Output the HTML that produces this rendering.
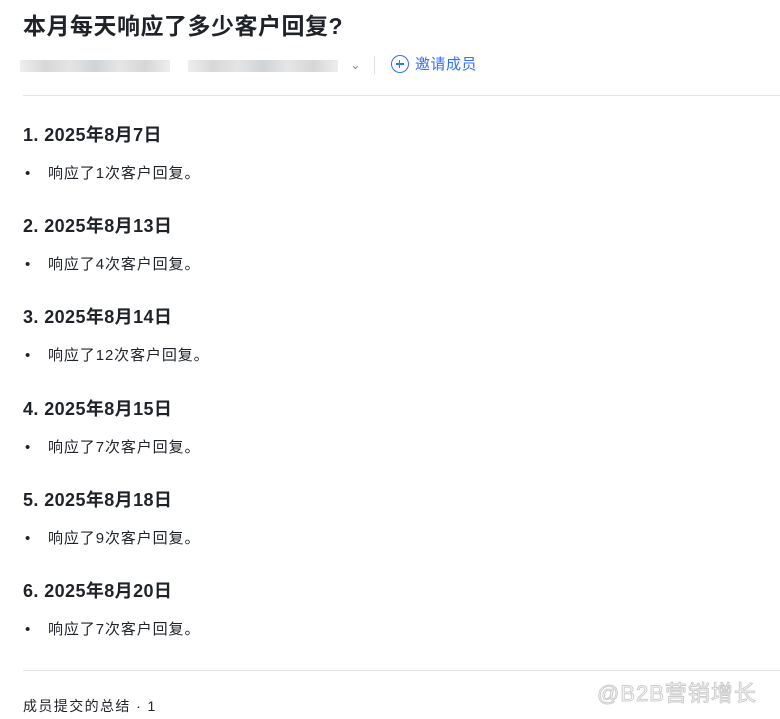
<!DOCTYPE html>
<html><head><meta charset="utf-8"><style>
body{margin:0;background:#fff;width:780px;height:719px;overflow:hidden;font-family:"Liberation Sans","Noto Sans CJK SC",sans-serif;color:#1f2329;position:relative}
h1{position:absolute;left:23px;top:10px;margin:0;font-size:23px;font-weight:bold;line-height:32px;letter-spacing:0.5px}
.meta{position:absolute;top:54px;left:20px;height:22px;width:460px}
.blur{position:absolute;height:12px;top:6px;background:linear-gradient(90deg,#eee,#d8d8d8,#e4e4e4,#d0d4d8,#e6e6e6,#d6d6d6,#eee)}
.sep{position:absolute;left:354px;top:2px;width:1px;height:18px;background:#dee0e3}
.inv{position:absolute;left:371px;top:0;color:#3370ff;font-size:15px;line-height:22px;letter-spacing:0.5px}
.inv span{display:inline-block;width:18px;height:18px;border:1.5px solid #3370ff;border-radius:50%;vertical-align:-4px;margin-right:6px;position:relative;box-sizing:border-box}
.inv span:before{content:"";position:absolute;left:3.5px;top:7px;width:8px;height:1.5px;background:#3370ff}
.inv span:after{content:"";position:absolute;left:6.75px;top:3.75px;width:1.5px;height:8px;background:#3370ff}
.hr{position:absolute;left:23px;right:0;height:1px;background:#e4e5e7}
h3{position:absolute;left:23px;margin:0;font-size:18px;font-weight:bold;line-height:24px;letter-spacing:0.4px}
.li{position:absolute;left:26px;font-size:15px;line-height:22px}
.li:before{content:"•";position:absolute;left:-1px}
.li b{font-weight:normal;margin-left:22px;letter-spacing:0.9px}
.foot{position:absolute;left:23px;top:696px;font-size:14px;line-height:20px;letter-spacing:1.4px}
.wm{position:absolute;left:597px;top:676px;font-size:22px;letter-spacing:1px;color:#fff;-webkit-text-stroke:1px #c8c8c8;opacity:.9}
</style></head><body>
<h1>本月每天响应了多少客户回复?</h1>
<div class="meta">
<div class="blur" style="left:0;width:150px"></div>
<div class="blur" style="left:168px;width:150px"></div>
<span style="position:absolute;left:330px;top:0;color:#8f959e;font-size:13px;line-height:22px">⌄</span>
<div class="sep"></div>
<div class="inv"><span></span>邀请成员</div>
</div>
<div class="hr" style="top:95px"></div>
<h3 style="top:123px">1. 2025年8月7日</h3><div class="li" style="top:163px"><b>响应了1次客户回复。</b></div>
<h3 style="top:214px">2. 2025年8月13日</h3><div class="li" style="top:254px"><b>响应了4次客户回复。</b></div>
<h3 style="top:305px">3. 2025年8月14日</h3><div class="li" style="top:345px"><b>响应了12次客户回复。</b></div>
<h3 style="top:397px">4. 2025年8月15日</h3><div class="li" style="top:437px"><b>响应了7次客户回复。</b></div>
<h3 style="top:488px">5. 2025年8月18日</h3><div class="li" style="top:528px"><b>响应了9次客户回复。</b></div>
<h3 style="top:579px">6. 2025年8月20日</h3><div class="li" style="top:619px"><b>响应了7次客户回复。</b></div>
<div class="hr" style="top:670px"></div>
<div class="foot">成员提交的总结 · 1</div>
<div class="wm">@B2B营销增长</div>
</body></html>
